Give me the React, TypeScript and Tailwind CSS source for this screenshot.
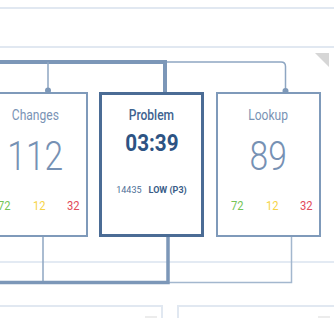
import React from 'react';

type Counts = { ok: number; warn: number; bad: number };

function CountRow({ c }: { c: Counts }) {
  return (
    <div className="mt-[22px] flex h-[14px] items-center justify-between pl-[12px] pr-[6px] text-[13px] leading-[14px]">
      <span className="inline-block w-[14px] scale-x-[0.86] text-center text-[#74c556]">{c.ok}</span>
      <span className="inline-block w-[14px] scale-x-[0.86] text-center text-[#f6d447]">{c.warn}</span>
      <span className="inline-block w-[14px] scale-x-[0.86] text-center text-[#e24b5a]">{c.bad}</span>
    </div>
  );
}

function CountCard({ title, value, counts }: { title: string; value: string; counts: Counts }) {
  return (
    <div className="relative z-10 h-[145px] w-[105px] shrink-0 border-2 border-[#7f9aba] bg-white">
      <div className="flex flex-col items-center pt-[13px]">
        <span className="inline-block h-[16px] scale-x-[0.86] text-[14px] leading-[16px] text-[#7a93b5]">{title}</span>
        <span className="mt-[14px] inline-block h-[40px] scale-x-[0.84] text-[40px] font-light leading-[40px] text-[#7691b4]">
          {value}
        </span>
      </div>
      <CountRow c={counts} />
    </div>
  );
}

function ProblemCard() {
  return (
    <div className="relative z-10 h-[145px] w-[105px] shrink-0 border-[3px] border-[#4b6c95] bg-white">
      <div className="flex flex-col items-center pt-[12px]">
        <span className="inline-block h-[16px] scale-x-[0.86] text-[14px] font-medium leading-[16px] text-[#3f6390]">Problem</span>
        <span className="mt-[7px] inline-block h-[26px] scale-x-[0.86] text-[24px] font-bold leading-[26px] text-[#2d5383]">
          03:39
        </span>
        <div className="mt-[28px] flex h-[12px] items-center gap-[7px] text-[9px] leading-[12px]">
          <span className="text-[#4e6e96]">14435</span>
          <span className="font-bold text-[#3a5d88]">LOW (P3)</span>
        </div>
      </div>
    </div>
  );
}

function Panel({ className }: { className: string }) {
  return (
    <div className={`relative h-[30px] border-2 border-b-0 border-[#e1e8f1] ${className}`}>
      <div className="absolute right-[4px] top-[9px] h-[6px] w-[12px] bg-[#ececec]" />
    </div>
  );
}

export default function App() {
  return (
    <div className="relative flex h-[318px] w-[334px] flex-col overflow-hidden bg-white font-['Roboto',sans-serif]">
      {/* top strip */}
      <div className="mt-[7px] h-[41px] shrink-0 border-y-2 border-[#e1e8f1]" />

      {/* connectors drawn under the cards */}
      <svg className="absolute left-0 top-0" width="334" height="318" viewBox="0 0 334 318">
        <polygon points="315,53 329,53 329,67" fill="#d6d6d6" />
        <g fill="none" strokeLinecap="butt">
          <path d="M-10 62 H165 V92" stroke="#7c97b8" strokeWidth="4" />
          <path d="M48 62 V90" stroke="#8ea6c2" strokeWidth="1.5" />
          <path d="M167 62 H281 Q285.5 62 285.5 66.5 V91" stroke="#8ea6c2" strokeWidth="1.5" />
          <path d="M43 237 V282" stroke="#8ea6c2" strokeWidth="1.5" />
          <path d="M291.5 237 V282.5 H168" stroke="#a3b7ce" strokeWidth="1.5" />
          <path d="M-10 282.5 H168 V237" stroke="#7c97b8" strokeWidth="3.5" />
        </g>
      </svg>

      {/* node row */}
      <div className="ml-[-17px] mt-[44px] flex shrink-0 gap-[11px]">
        <CountCard title="Changes" value="112" counts={{ ok: 72, warn: 12, bad: 32 }} />
        <ProblemCard />
        <div className="ml-px">
          <CountCard title="Lookup" value="89" counts={{ ok: 72, warn: 12, bad: 32 }} />
        </div>
      </div>

      {/* connector dots on top of card borders */}
      <svg className="absolute left-0 top-0 z-20" width="334" height="318" viewBox="0 0 334 318">
        <circle cx="48" cy="90.5" r="3" fill="#7d98b8" />
        <circle cx="285.5" cy="91" r="3" fill="#7d98b8" />
      </svg>

      <div className="mt-[24px] h-[2px] shrink-0 bg-[#e3eaf3]" />

      {/* bottom panels */}
      <div className="ml-[-4px] mt-[42px] flex shrink-0 gap-[14px]">
        <Panel className="w-[167px]" />
        <Panel className="flex-1 border-r-0" />
      </div>
    </div>
  );
}
